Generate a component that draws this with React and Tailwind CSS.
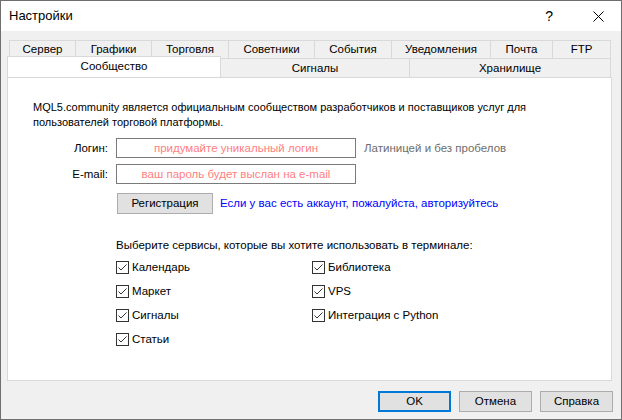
import React from "react";

const font = { fontFamily: '"Liberation Sans", Arial, sans-serif' };

function Check({ label }) {
  return (
    <div className="flex h-[24px] items-center">
      <div className="flex h-[13px] w-[13px] items-center justify-center border border-[#333333] bg-white">
        <svg width="11" height="11" viewBox="0 0 11 11">
          <polyline points="1.5,5.5 4,8 9.5,2.5" fill="none" stroke="#333333" strokeWidth="1" />
        </svg>
      </div>
      <span className="ml-[3px] text-[11.5px] leading-[15px] text-black">{label}</span>
    </div>
  );
}

function Btn({ children, primary, w = "w-[73px]" }) {
  return (
    <div
      className={
        "flex h-[21px] items-center justify-center bg-[#e1e1e1] text-[11.5px] text-black " +
        w +
        (primary ? " border-2 border-[#0078d7]" : " border border-[#adadad]")
      }
    >
      {children}
    </div>
  );
}

export default function App() {
  const row1 = [
    ["Сервер", "w-[67px]"],
    ["Графики", "w-[76px]"],
    ["Торговля", "w-[77px]"],
    ["Советники", "w-[86px]"],
    ["События", "w-[77px]"],
    ["Уведомления", "w-[99px]"],
    ["Почта", "w-[62px]"],
    ["FTP", "w-[58px]"],
  ];
  return (
    <div style={font} className="flex h-[420px] w-[622px] flex-col border border-[#6f6f6f] bg-[#f0f0f0] text-black">
      {/* title bar */}
      <div className="flex h-[30px] shrink-0 items-center bg-white">
        <span className="ml-[8px] text-[13px]">Настройки</span>
        <span className="ml-auto mr-[40px] text-[14px] leading-[14px]">?</span>
        <svg className="mr-[17px]" width="11" height="11" viewBox="0 0 11 11">
          <line x1="0.5" y1="0.5" x2="10.5" y2="10.5" stroke="#000" strokeWidth="1" />
          <line x1="10.5" y1="0.5" x2="0.5" y2="10.5" stroke="#000" strokeWidth="1" />
        </svg>
      </div>

      {/* tabs */}
      <div className="mt-[9px] flex flex-col">
        <div className="ml-[8px] flex h-[18px]">
          {row1.map(([t, w], i) => (
            <div
              key={t}
              className={
                "flex h-[18px] items-center justify-center border-t border-r border-[#d9d9d9] text-[11.5px] leading-[15px] " +
                w +
                (i === 0 ? " border-l" : "")
              }
            >
              {t}
            </div>
          ))}
        </div>
        <div className="relative ml-[6px] flex h-[19px] items-end">
          <div className="relative z-10 -mt-[2px] flex h-[21px] w-[214px] items-start justify-center border-x border-t border-[#d9d9d9] bg-white pt-[2px] text-[11.5px] leading-[15px]">
            Сообщество
          </div>
          <div className="flex h-[19px] w-[189px] items-center justify-center border-t border-r border-[#d9d9d9] text-[11.5px] leading-[15px]">
            Сигналы
          </div>
          <div className="flex h-[19px] w-[201px] items-center justify-center border-t border-r border-[#d9d9d9] text-[11.5px] leading-[15px]">
            Хранилище
          </div>
        </div>
      </div>

      {/* panel */}
      <div className="ml-[6px] flex h-[304px] w-[605px] flex-col border border-[#d9d9d9] bg-white text-[11.5px]">
        <div className="ml-[25px] mt-[22px] text-[11px] leading-[15px]">
          MQL5.community является официальным сообществом разработчиков и поставщиков услуг для
          <br />
          пользователей торговой платформы.
        </div>

        <div className="mt-[8px] flex h-[20px] items-center">
          <div className="w-[100px] text-right leading-[15px]">Логин:</div>
          <div className="ml-[8px] flex h-[20px] w-[240px] items-center justify-center border border-[#7a7a7a] text-[#ff8080] leading-[15px]">
            придумайте уникальный логин
          </div>
          <div className="ml-[8px] text-[#6d6d6d] leading-[15px]">Латиницей и без пробелов</div>
        </div>

        <div className="mt-[6px] flex h-[20px] items-center">
          <div className="w-[100px] text-right leading-[15px]">E-mail:</div>
          <div className="ml-[8px] flex h-[20px] w-[240px] items-center justify-center border border-[#7a7a7a] text-[#ff8080] leading-[15px]">
            ваш пароль будет выслан на e-mail
          </div>
        </div>

        <div className="mt-[9px] flex items-center">
          <div className="ml-[109px]">
            <Btn w="w-[96px]">Регистрация</Btn>
          </div>
          <div className="ml-[7px] text-[#0000ff] leading-[15px]">
            Если у вас есть аккаунт, пожалуйста, авторизуйтесь
          </div>
        </div>

        <div className="ml-[108px] mt-[24px] leading-[15px]">
          Выберите сервисы, которые вы хотите использовать в терминале:
        </div>

        <div className="ml-[108px] mt-[2px] grid grid-cols-[196px_196px]">
          <Check label="Календарь" />
          <Check label="Библиотека" />
          <Check label="Маркет" />
          <Check label="VPS" />
          <Check label="Сигналы" />
          <Check label="Интеграция с Python" />
          <Check label="Статьи" />
        </div>
      </div>

      {/* buttons */}
      <div className="mr-[8px] mt-[10px] flex justify-end gap-[8px]">
        <Btn primary>OK</Btn>
        <Btn>Отмена</Btn>
        <Btn>Справка</Btn>
      </div>
    </div>
  );
}
